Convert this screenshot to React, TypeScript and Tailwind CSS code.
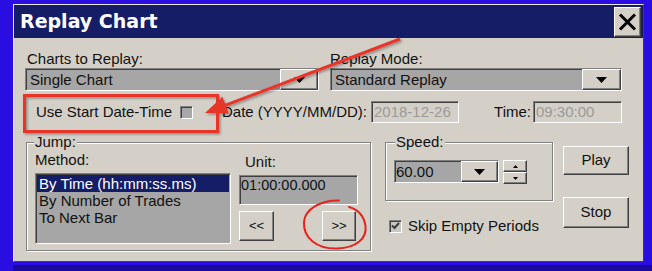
import React from 'react';

// classic win32 bevels
const raised =
  'border border-t-white border-l-white border-r-[#404040] border-b-[#404040] shadow-[inset_-1px_-1px_0_#808080]';
const sunken =
  'border border-t-[#808080] border-l-[#808080] border-r-white border-b-white shadow-[inset_1px_1px_0_#404040]';
const etched = 'border border-[#808080] shadow-[inset_1px_1px_0_#ffffff,1px_1px_0_#ffffff]';

const DownArrow: React.FC = () => (
  <svg width="11" height="6" viewBox="0 0 11 6">
    <path d="M0 0h11L5.5 6z" fill="#000" />
  </svg>
);

const Combo: React.FC<{ text: string; className: string; btn: string; textPad?: string }> = ({
  text,
  className,
  btn,
  textPad = 'pl-[3px]',
}) => (
  <div className={`flex h-[23px] bg-[#a6a6a6] ${sunken} ${className}`}>
    <div className={`flex-1 leading-[21px] ${textPad}`}>{text}</div>
    <div className={`flex items-center justify-center bg-[#d4d0c8] ${raised} ${btn}`}>
      <DownArrow />
    </div>
  </div>
);

const Disabled: React.FC<{ text: string; className: string }> = ({ text, className }) => (
  <div className={`h-[22px] bg-[#d4d0c8] pl-[2px] leading-[20px] text-[#9a9a9a] ${sunken} ${className}`}>
    {text}
  </div>
);

const PushButton: React.FC<{ label: string; className: string }> = ({ label, className }) => (
  <div className={`flex items-center justify-center bg-[#d4d0c8] ${raised} ${className}`}>{label}</div>
);

// red annotation drawn over the dialog
const Annotations: React.FC = () => (
  <svg className="pointer-events-none absolute left-0 top-0" width="652" height="271" viewBox="0 0 652 271">
    <defs>
      <filter id="sh" x="-20%" y="-20%" width="140%" height="140%">
        <feDropShadow dx="1.5" dy="1.5" stdDeviation="1.2" floodColor="#000" floodOpacity="0.35" />
      </filter>
    </defs>
    <g filter="url(#sh)">
      <rect x="24.5" y="95.5" width="193" height="36" fill="none" stroke="#e8352b" strokeWidth="3" />
      <line x1="400" y1="39" x2="225" y2="105.4" stroke="#e8352b" strokeWidth="3" />
      <polygon points="205,113 228.8,113.6 222.4,96.8" fill="#e8352b" />
    </g>
    <path
      d="M339 200.5 C321 200, 305 209, 304 222 C303 238, 317 249, 337 248.5 C357 248, 367 238, 365.5 226 C364 216, 358 209.5, 349 207"
      fill="none"
      stroke="#e5231c"
      strokeWidth="2"
      strokeLinecap="round"
    />
  </svg>
);

export default function App() {
  return (
    <div className="relative flex h-[271px] w-[652px] flex-col overflow-hidden bg-[#2a0de0] pl-[13px] pt-[4px] font-['Liberation_Sans',Arial,sans-serif] text-[15px] text-[#111]">
      <div className="flex h-[258px] w-[631px] flex-col border border-t-[#e8e8e8] border-l-[#e8e8e8] border-r-[#404040] border-b-[#404040] bg-[#d4d0c8]">
        {/* Title bar */}
        <div className="flex h-[33px] items-center justify-between bg-[#151d66] pl-[6px] pr-[2px]">
          <span className="font-['DejaVu_Sans',sans-serif] text-[19px] font-bold text-white">Replay Chart</span>
          <div className={`flex h-[30px] w-[27px] items-center justify-center bg-[#d4d0c8] ${raised}`}>
            <svg width="19" height="18" viewBox="0 0 19 18">
              <path d="M2 1.5L17 16.5M17 1.5L2 16.5" stroke="#000" strokeWidth="3" />
            </svg>
          </div>
        </div>

        {/* Body */}
        <div className="flex flex-col pl-[11px] pt-[13px]">
          <div className="flex">
            <div className="flex w-[294px] flex-col">
              <div className="pl-[2px] leading-[16px]">Charts to Replay:</div>
              <Combo text="Single Chart" className="mt-[1px] w-[294px]" btn="w-[38px]" textPad="pl-[4px]" />
            </div>
            <div className="ml-[11px] flex w-[292px] flex-col">
              <div className="leading-[16px]">Replay Mode:</div>
              <Combo text="Standard Replay" className="mt-[1px] w-[292px]" btn="w-[39px]" textPad="pl-[4px]" />
            </div>
          </div>

          {/* Start date-time row */}
          <div className="mt-[10px] flex h-[22px] items-center">
            <span className="w-[155px] pl-[11px]">Use Start Date-Time</span>
            <div className={`h-[13px] w-[13px] bg-[#a8a8a8] ${sunken}`} />
            <span className="ml-[29px] w-[149px]">Date (YYYY/MM/DD):</span>
            <Disabled text="2018-12-26" className="w-[88px]" />
            <span className="w-[74px] pr-[2px] text-right">Time:</span>
            <Disabled text="09:30:00" className="w-[89px]" />
          </div>

          {/* Lower area */}
          <div className="mt-[19px] flex items-start">
            {/* Jump group */}
            <div className={`relative ml-[1px] flex h-[109px] w-[345px] ${etched}`}>
              <span className="absolute left-[7px] top-[-9px] bg-[#d4d0c8] px-[1px] leading-[16px]">Jump:</span>
              <div className="ml-[8px] flex w-[196px] flex-col">
                <div className="mt-[9px] leading-[16px]">Method:</div>
                <div className={`mt-[5px] h-[71px] w-[196px] bg-[#a6a6a6] ${sunken}`}>
                  <div className="ml-[1px] mt-[1px] mr-[1px] h-[17px] bg-[#151d66] pl-[2px] leading-[17px] text-white">
                    By Time (hh:mm:ss.ms)
                  </div>
                  <div className="h-[17px] pl-[3px] leading-[18px]">By Number of Trades</div>
                  <div className="h-[17px] pl-[3px] leading-[18px]">To Next Bar</div>
                </div>
              </div>
              <div className="ml-[8px] flex w-[119px] flex-col">
                <div className="ml-[6px] mt-[11px] leading-[16px]">Unit:</div>
                <div className={`mt-[5px] h-[30px] w-[119px] bg-[#a6a6a6] pl-[1px] pt-[1px] text-[14.5px] leading-[17px] ${sunken}`}>
                  01:00:00.000
                </div>
                <div className="mt-[6px] flex">
                  <PushButton label="<<" className="h-[30px] w-[35px] text-[13px]" />
                  <PushButton label=">>" className="ml-[48px] h-[30px] w-[34px] text-[13px]" />
                </div>
              </div>
            </div>

            {/* Speed + skip */}
            <div className="ml-[14px] flex flex-col">
              <div className={`relative h-[59px] w-[168px] pl-[8px] pt-[17px] ${etched}`}>
                <span className="absolute left-[9px] top-[-9px] bg-[#d4d0c8] px-[1px] leading-[16px]">Speed:</span>
                <div className="flex items-start">
                  <Combo text="60.00" className="w-[105px]" btn="w-[37px]" textPad="pl-[1px]" />
                  <div className="ml-[4px] flex h-[24px] w-[24px] flex-col">
                    <div className={`flex h-[12px] items-center justify-center bg-[#d4d0c8] ${raised}`}>
                      <svg width="5" height="3" viewBox="0 0 5 3">
                        <path d="M0 3h5L2.5 0z" fill="#000" />
                      </svg>
                    </div>
                    <div className={`flex h-[12px] items-center justify-center bg-[#d4d0c8] ${raised}`}>
                      <svg width="5" height="3" viewBox="0 0 5 3">
                        <path d="M0 0h5L2.5 3z" fill="#000" />
                      </svg>
                    </div>
                  </div>
                </div>
              </div>
              <div className="ml-[4px] mt-[17px] flex items-center">
                <div className={`flex h-[13px] w-[13px] items-center justify-center bg-[#c8c6c0] ${sunken}`}>
                  <svg width="9" height="8" viewBox="0 0 9 8">
                    <path d="M1 3.5L3.5 6L8 1" fill="none" stroke="#3a3a3a" strokeWidth="2" />
                  </svg>
                </div>
                <span className="ml-[6px] leading-[16px]">Skip Empty Periods</span>
              </div>
            </div>

            {/* Play / Stop */}
            <div className="ml-[10px] flex flex-col">
              <PushButton label="Play" className="mt-[4px] h-[29px] w-[66px]" />
              <PushButton label="Stop" className="mt-[22px] h-[31px] w-[66px]" />
            </div>
          </div>
        </div>
      </div>
      <div className="mt-[3px] h-[6px] w-full bg-[#1c0a9e]" />
      <Annotations />
    </div>
  );
}
